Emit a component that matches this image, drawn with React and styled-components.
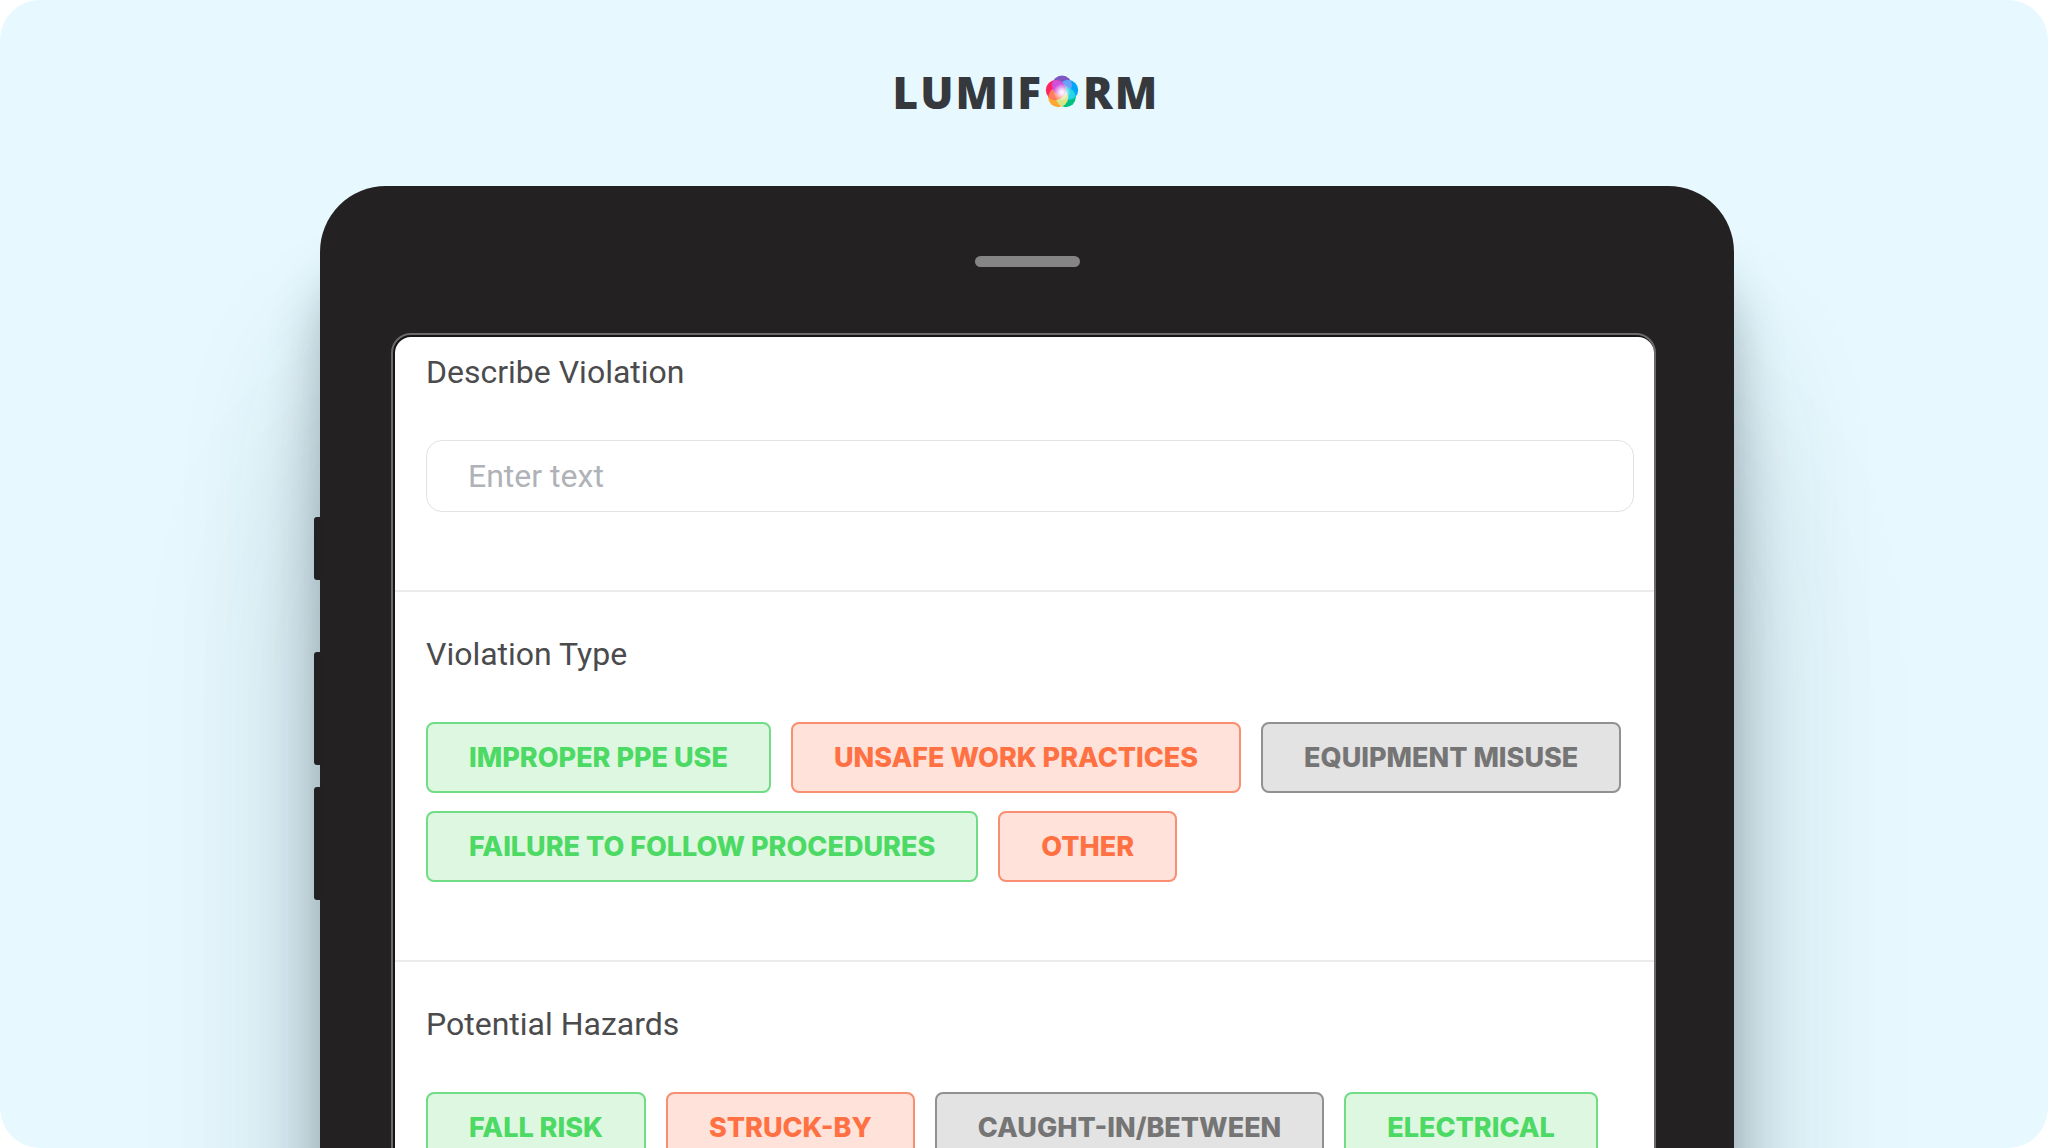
import React from 'react';
import styled, { createGlobalStyle } from 'styled-components';

const GlobalStyle = createGlobalStyle`
  *, *::before, *::after { box-sizing: border-box; }
  body { margin: 0; background: #fff; font-family: Roboto, "Liberation Sans", sans-serif; }
`;

const tones = {
  green: { text: '#4cd964', line: '#71dc86', fill: '#def7e0' },
  orange: { text: '#ff7043', line: '#f98e70', fill: '#ffe2da' },
  gray: { text: '#757575', line: '#919191', fill: '#e3e3e3' },
};

const Stage = styled.main`
  display: flex;
  flex-direction: column;
  height: 100vh;
  overflow: hidden;
  border-radius: 40px;
  background: #e7f9ff;
`;

const Header = styled.header`
  display: flex;
  justify-content: center;
  flex: none;
  height: 186px;
  padding: 64px 0 0 4px;
`;

const Wordmark = styled.h1`
  display: flex;
  align-items: center;
  height: 56px;
  margin: 0;
  color: #35383c;
  font-family: "Open Sans", sans-serif;
  font-size: 44px;
  font-weight: 800;
  line-height: 56px;
  letter-spacing: 2px;
`;

const Gem = styled.svg`
  width: 34px;
  height: 34px;
  margin: 0 4px 0 2px;
`;

const DeviceArea = styled.div`
  flex: none;
  padding: 0 314px 0 320px;
`;

const Tablet = styled.div`
  position: relative;
  padding: 0 78px 108px 71px;
  border-radius: 66px;
  background: #232122;
  box-shadow:
    0 84px 50px rgba(30, 45, 55, 0.3),
    0 160px 140px rgba(30, 45, 55, 0.18),
    0 300px 200px rgba(30, 45, 55, 0.1);
`;

const SideKeys = styled.div`
  position: absolute;
  top: 331px;
  left: -6px;
`;

const SideKey = styled.div`
  width: 10px;
  height: ${({ $height }) => $height}px;
  margin-bottom: ${({ $gap }) => $gap}px;
  border-radius: 3px;
  background: #222122;
`;

const Bezel = styled.div`
  display: flex;
  justify-content: center;
  height: 147px;
  padding-top: 70px;
`;

const Speaker = styled.div`
  width: 105px;
  height: 11px;
  margin-left: 8px;
  border-radius: 6px;
  background: #858585;
`;

const Screen = styled.div`
  padding: 2px 0 2px 2px;
  border: 2px solid #6b696b;
  border-radius: 20px;
  background: #161415;
`;

const Form = styled.form`
  border-radius: 16px;
  background: #fff;
  overflow: hidden;
`;

const Section = styled.section`
  padding: ${({ $first }) => ($first ? 17 : 44)}px 20px 78px 31px;
  & + & { border-top: 2px solid #ececec; }
`;

const labelText = `
  display: block;
  margin: 0 0 50px;
  color: #4b4b4d;
  font-size: 32px;
  font-weight: 400;
  line-height: 36px;
`;

const FieldLabel = styled.label`${labelText}`;
const GroupLabel = styled.h2`${labelText}`;

const TextField = styled.input`
  display: block;
  width: 100%;
  height: 72px;
  padding: 0 41px;
  border: 1px solid #e2e2e2;
  border-radius: 16px;
  background: #fff;
  color: #4b4b4d;
  font-family: inherit;
  font-size: 32px;
  &::placeholder { color: #afb2b6; opacity: 1; }
`;

const Options = styled.div`
  display: flex;
  flex-wrap: wrap;
  gap: 18px 20px;
`;

const Option = styled.button`
  height: 71px;
  padding: 0 41px;
  border: 2px solid ${({ $tone }) => tones[$tone].line};
  border-radius: 8px;
  background: ${({ $tone }) => tones[$tone].fill};
  color: ${({ $tone }) => tones[$tone].text};
  font-family: Inter, sans-serif;
  font-size: 27px;
  font-weight: 800;
  line-height: 32px;
  white-space: nowrap;
`;

const groups = [
  {
    id: 'violation-type',
    title: 'Violation Type',
    options: [
      ['IMPROPER PPE USE', 'green'],
      ['UNSAFE WORK PRACTICES', 'orange'],
      ['EQUIPMENT MISUSE', 'gray'],
      ['FAILURE TO FOLLOW PROCEDURES', 'green'],
      ['OTHER', 'orange'],
    ],
  },
  {
    id: 'potential-hazards',
    title: 'Potential Hazards',
    options: [
      ['FALL RISK', 'green'],
      ['STRUCK-BY', 'orange'],
      ['CAUGHT-IN/BETWEEN', 'gray'],
      ['ELECTRICAL', 'green'],
    ],
  },
];

const petals = [
  { x: 17, y: 10.5, fill: '#7e57c2', overlap: '#6aa0f8' },
  { x: 23.2, y: 15, fill: '#00a6fb', overlap: '#27d3e6' },
  { x: 20.8, y: 22.3, fill: '#00c184', overlap: '#d6e685' },
  { x: 13.2, y: 22.3, fill: '#ffa733', overlap: '#ff7d5c' },
  { x: 10.8, y: 15, fill: '#ff2460', overlap: '#d04fdc' },
];

function LogoGem() {
  return (
    <Gem viewBox="0 0 34 34" aria-hidden="true">
      <defs>
        <radialGradient id="gem-glow">
          <stop offset="0" stopColor="#fff" />
          <stop offset="0.3" stopColor="#fff" stopOpacity="0.8" />
          <stop offset="1" stopColor="#fff" stopOpacity="0" />
        </radialGradient>
        {petals.map(({ x, y }, i) => (
          <clipPath key={i} id={`petal-${i}`}>
            <circle cx={x} cy={y} r="10" />
          </clipPath>
        ))}
      </defs>
      {petals.map(({ x, y, fill }, i) => (
        <circle key={i} cx={x} cy={y} r="10" fill={fill} />
      ))}
      {petals.map(({ overlap }, i) => {
        const next = petals[(i + 1) % petals.length];
        return (
          <circle key={i} cx={next.x} cy={next.y} r="10" fill={overlap} clipPath={`url(#petal-${i})`} />
        );
      })}
      <circle cx="17" cy="17.5" r="9" fill="url(#gem-glow)" />
    </Gem>
  );
}

export default function App() {
  return (
    <>
      <GlobalStyle />
      <Stage>
        <Header>
          <Wordmark aria-label="Lumiform">
            <span>LUMIF</span>
            <LogoGem />
            <span>RM</span>
          </Wordmark>
        </Header>
        <DeviceArea>
          <Tablet>
            <SideKeys>
              <SideKey $height={63} $gap={72} />
              <SideKey $height={113} $gap={22} />
              <SideKey $height={113} $gap={0} />
            </SideKeys>
            <Bezel>
              <Speaker />
            </Bezel>
            <Screen>
              <Form>
                <Section $first>
                  <FieldLabel htmlFor="describe-violation">Describe Violation</FieldLabel>
                  <TextField id="describe-violation" type="text" placeholder="Enter text" />
                </Section>
                {groups.map(({ id, title, options }) => (
                  <Section key={id}>
                    <GroupLabel id={id}>{title}</GroupLabel>
                    <Options role="group" aria-labelledby={id}>
                      {options.map(([text, tone]) => (
                        <Option key={text} type="button" $tone={tone}>{text}</Option>
                      ))}
                    </Options>
                  </Section>
                ))}
              </Form>
            </Screen>
          </Tablet>
        </DeviceArea>
      </Stage>
    </>
  );
}
